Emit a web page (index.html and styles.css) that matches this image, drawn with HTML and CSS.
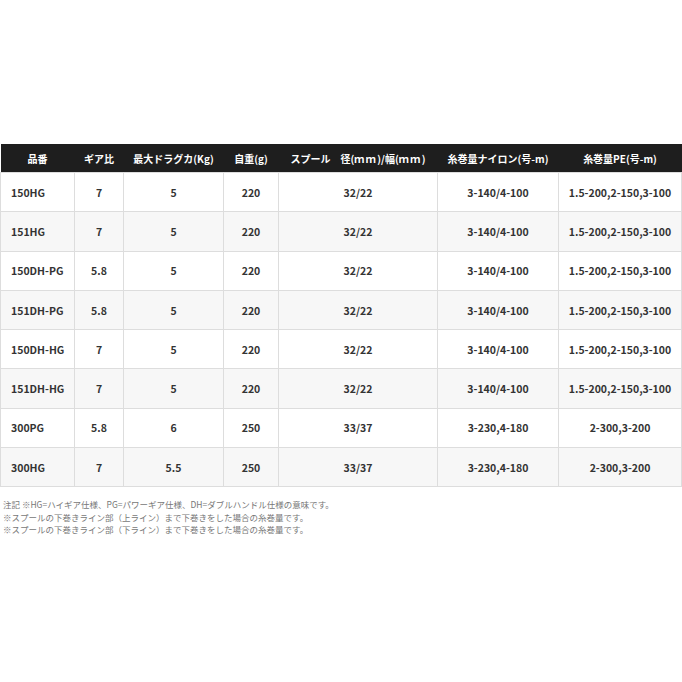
FILE: index.html
```html
<!DOCTYPE html>
<html lang="ja">
<head>
<meta charset="utf-8">
<link rel="stylesheet" href="styles.css">
</head>
<body>
<div class="page">
  <table class="spec">
    <colgroup>
      <col class="c1"><col class="c2"><col class="c3"><col class="c4"><col class="c5"><col class="c6"><col class="c7">
    </colgroup>
    <thead>
      <tr>
        <th>品番</th><th>ギア比</th><th>最大ドラグカ(Kg)</th><th>自重(g)</th><th>スプール　径(<span class="wide">ｍｍ</span>)/幅(<span class="wide">ｍｍ</span>)</th><th>糸巻量ナイロン(号-m)</th><th>糸巻量PE(号-m)</th>
      </tr>
    </thead>
    <tbody>
      <tr><td class="name">150HG</td><td>7</td><td>5</td><td>220</td><td>32/22</td><td>3-140/4-100</td><td>1.5-200,2-150,3-100</td></tr>
      <tr><td class="name">151HG</td><td>7</td><td>5</td><td>220</td><td>32/22</td><td>3-140/4-100</td><td>1.5-200,2-150,3-100</td></tr>
      <tr><td class="name">150DH-PG</td><td>5.8</td><td>5</td><td>220</td><td>32/22</td><td>3-140/4-100</td><td>1.5-200,2-150,3-100</td></tr>
      <tr><td class="name">151DH-PG</td><td>5.8</td><td>5</td><td>220</td><td>32/22</td><td>3-140/4-100</td><td>1.5-200,2-150,3-100</td></tr>
      <tr><td class="name">150DH-HG</td><td>7</td><td>5</td><td>220</td><td>32/22</td><td>3-140/4-100</td><td>1.5-200,2-150,3-100</td></tr>
      <tr><td class="name">151DH-HG</td><td>7</td><td>5</td><td>220</td><td>32/22</td><td>3-140/4-100</td><td>1.5-200,2-150,3-100</td></tr>
      <tr><td class="name">300PG</td><td>5.8</td><td>6</td><td>250</td><td>33/37</td><td>3-230,4-180</td><td>2-300,3-200</td></tr>
      <tr><td class="name">300HG</td><td>7</td><td>5.5</td><td>250</td><td>33/37</td><td>3-230,4-180</td><td>2-300,3-200</td></tr>
    </tbody>
  </table>
  <div class="notes">
    <p>注記 ※HG=ハイギア仕様、PG=パワーギア仕様、DH=ダブルハンドル仕様の意味です。</p>
    <p>※スプールの下巻きライン部（上ライン）まで下巻きをした場合の糸巻量です。</p>
    <p>※スプールの下巻きライン部（下ライン）まで下巻きをした場合の糸巻量です。</p>
  </div>
</div>
</body>
</html>
```

FILE: styles.css
```css
html, body {
  margin: 0;
  padding: 0;
  background: #ffffff;
}
body {
  font-family: "Noto Sans CJK JP", "Noto Sans", sans-serif;
  color: #333333;
}
.page {
  padding-top: 144px;
}
.spec {
  width: 681px;
  border-collapse: collapse;
  table-layout: fixed;
}
.c1 { width: 74px; }
.c2 { width: 49px; }
.c3 { width: 100px; }
.c4 { width: 55px; }
.c5 { width: 159px; }
.c6 { width: 121px; }
.c7 { width: 123px; }
.spec th {
  background: #1e1e1e;
  color: #ffffff;
  font-size: 10px;
  font-weight: 700;
  height: 28px;
  padding: 0;
  text-align: center;
  white-space: nowrap;
  border: none;
}
.spec th .wide {
  letter-spacing: 1.5px;
}
.spec td {
  height: 38.3px;
  padding: 0;
  font-size: 10.5px;
  font-weight: 700;
  color: #333333;
  text-align: center;
  border: 1px solid #dddddd;
  white-space: nowrap;
}
.spec td.name {
  text-align: left;
  padding-left: 10px;
}
.spec tbody tr:nth-child(even) td {
  background: #f7f7f7;
}
.notes {
  padding: 11px 0 0 3px;
}
.notes p {
  margin: 0;
  font-size: 8.5px;
  line-height: 12.5px;
  color: #777777;
}
```
